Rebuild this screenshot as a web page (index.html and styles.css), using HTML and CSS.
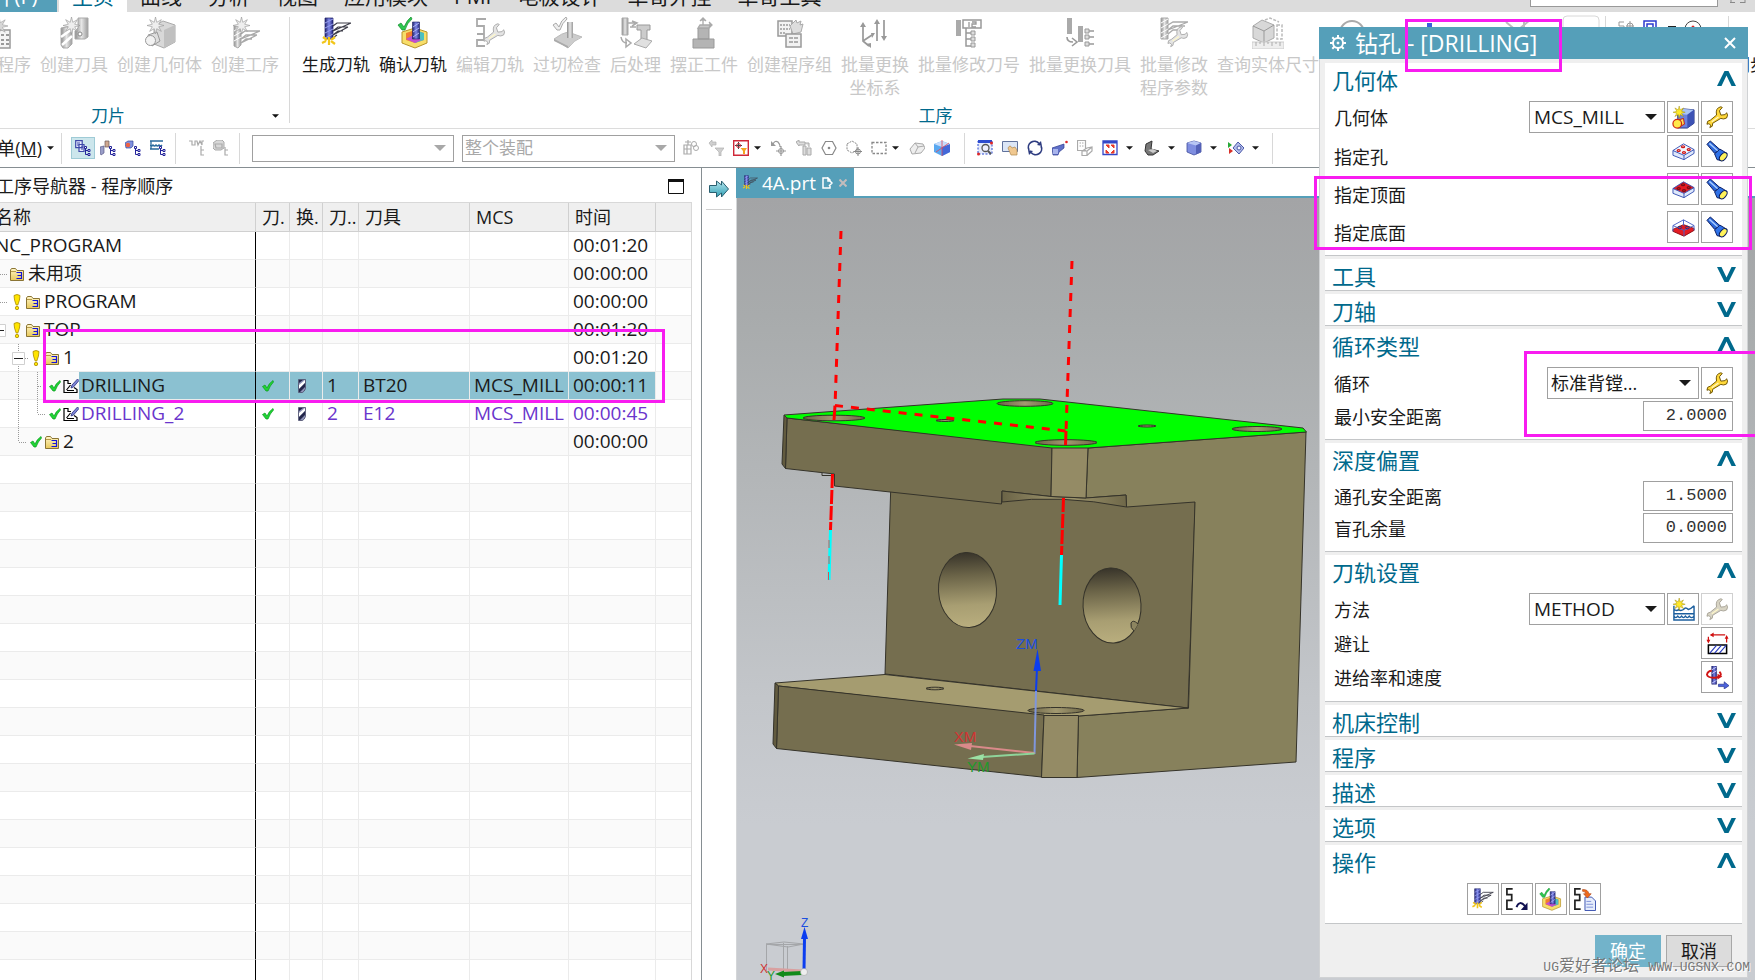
FILE: index.html
```html
<!DOCTYPE html>
<html lang="zh-CN">
<head>
<meta charset="utf-8">
<title>钻孔 - [DRILLING]</title>
<link rel="stylesheet" href="styles.css">
</head>
<body>
<svg class="defs" aria-hidden="true">
  <defs>
    <linearGradient id="gSteel"><stop offset="0" stop-color="#8c8c8c"/><stop offset=".5" stop-color="#e6e6e6"/><stop offset="1" stop-color="#9c9c9c"/></linearGradient>
    <linearGradient id="gBlue"><stop offset="0" stop-color="#22246e"/><stop offset=".5" stop-color="#7f88ea"/><stop offset="1" stop-color="#23257a"/></linearGradient>
    <linearGradient id="gHole" x2="0" y2="1"><stop offset="0" stop-color="#38342a"/><stop offset=".3" stop-color="#6b6448"/><stop offset=".7" stop-color="#a89e72"/><stop offset="1" stop-color="#b9ae7e"/></linearGradient>
    <linearGradient id="gRim"><stop offset="0" stop-color="#6b6447"/><stop offset=".5" stop-color="#a29970"/><stop offset="1" stop-color="#6f6849"/></linearGradient>
    <linearGradient id="gGold" x2="0" y2="1"><stop offset="0" stop-color="#fff6c8"/><stop offset="1" stop-color="#e8c85a"/></linearGradient>
    <linearGradient id="gCyan" x2="0" y2="1"><stop offset="0" stop-color="#b6e6ee"/><stop offset="1" stop-color="#2f9fb4"/></linearGradient>
  </defs>
  <symbol id="star" viewBox="0 0 16 16"><path d="M8 0l1.200 5L13.500 2.500 11 6.800 16 8l-5 1.200 2.500 4.300L9.200 11 8 16 6.800 11 2.500 13.500 5 9.200 0 8l5-1.200L2.500 2.500 6.800 5z"/></symbol>
  <symbol id="chev-up" viewBox="0 0 19 15"><path d="M0 15L7.500 0h4L19 15h-4.500L9.500 4.500 4.500 15z" fill="#00698c"/></symbol>
  <symbol id="chev-down" viewBox="0 0 19 15"><path d="M0 0l7.500 15h4L19 0h-4.500L9.500 10.500 4.500 0z" fill="#00698c"/></symbol>
  <symbol id="caret" viewBox="0 0 12 6"><path d="M0 0h12L6 6z" fill="currentColor"/></symbol>
  <symbol id="folder" viewBox="0 0 14 13"><path d="M.5 12.500V2L1.500.5h4L7 2.500h6.500v10z" fill="url(#gGold)" stroke="#8a7434"/><path d="M1 3.500h5" stroke="#b79a48"/><path d="M6.500 4.500h5v3h-4M11.500 7.500v3h-5" fill="none" stroke="#1414d8" stroke-width="1.200"/></symbol>
  <symbol id="bang" viewBox="0 0 8 16"><path d="M1 1.500Q4-.5 7 1.500 7 6 4.800 11H3.200Q1 6 1 1.500z" fill="#ffe500" stroke="#a98a00" stroke-width=".8"/><circle cx="4" cy="14" r="1.700" fill="#ffe500" stroke="#a98a00" stroke-width=".8"/></symbol>
  <symbol id="tick" viewBox="0 0 12 12"><path d="M.5 6.500L3 5l2 3Q7 3 11 .5l.5 1.500Q8 5.500 6 11H4z" fill="#1fd534" stroke="#0c9a20" stroke-width=".7"/></symbol>
  <symbol id="opdoc" viewBox="0 0 16 16"><path d="M5 2.500H1v12h13v-3l-3-2M1 2.500h4v3h3M3.500 12l4-5M4 12.500h7" fill="none" stroke="#000" stroke-width="1.200"/><path d="M8 10l1-3 5.500-6L16 2.500 10.500 9z" fill="#7d86d6" stroke="#2a2f80" stroke-width=".8"/></symbol>
  <symbol id="bit" viewBox="0 0 8 14"><path d="M.5.500h7v9q-1 3-3 4h-4z" fill="#8f93b8" stroke="#4a4c6a" stroke-width=".8"/><path d="M1 6L7 1v3L1 10z" fill="#fff"/><path d="M1 10L7 4v4L2 13H1zM1 1h4L1 4z" fill="#23264a"/></symbol>
  <symbol id="wrench" viewBox="0 0 24 24"><path d="M22.500 9.500q0 4-4 4-2-.2-3-.6L7 18q.5 4-3 4.500L5 20l-2-1.500L1 19q-.2-4 3.500-4.200L11 9.500Q9.500 2 15.500.8L17 1.500 14 5l1.500 4.500L20 9l1.500-2z" fill="var(--wf,#ffd83a)" stroke="var(--ws,#6d5300)" stroke-width="1"/><path d="M6 16.500l7-5" stroke="#fff8c8" stroke-width="1.200"/></symbol>
  <symbol id="torch" viewBox="0 0 24 24"><path d="M1 4.500L4.500 1l10 9L9 14z" fill="#2b66d8" stroke="#0a1c60"/><path d="M3.500 3.500l9 8" stroke="#a8ccff" stroke-width="1.500"/><path d="M9 14.500l5.500-5 7.500 4.500-6 7.500-4.500-1z" fill="#2f72e8" stroke="#0a1c60"/><ellipse cx="18" cy="17.500" rx="3" ry="5" transform="rotate(40 18 17.500)" fill="#fff25a" stroke="#0a1c60"/></symbol>
  <symbol id="plate" viewBox="0 0 24 18"><path d="M1 8v5l11.500 4.500L23 11V7z" fill="#dfe8fb" stroke="#3b55b5"/><path d="M1 8L12 1l11 6-10.500 6z" fill="var(--top,#f2f5fd)" stroke="#3b55b5"/><path d="M12.500 13v4.500" stroke="#3b55b5"/><g fill="none" stroke="var(--dot,#d01818)" stroke-width="1.300"><ellipse cx="11.500" cy="4" rx="1.600" ry="1"/><ellipse cx="7" cy="8" rx="1.600" ry="1"/><ellipse cx="12.500" cy="10" rx="1.600" ry="1"/><ellipse cx="17.500" cy="7" rx="1.600" ry="1"/></g></symbol>
  <symbol id="plate-bottom" viewBox="0 0 24 18"><path d="M1 11v2l11.500 5L23 12v-2L12 6z" fill="#e51b23" stroke="#8f1016"/><path d="M1 7L12 1l11 6-10.500 5zM1 7v6M23 7v5M12.500 12v6M12 1v6" fill="none" stroke="#4a63c8"/><g fill="none" stroke="#26307c"><ellipse cx="8" cy="9" rx="2" ry="1.300"/><ellipse cx="16" cy="9" rx="2" ry="1.300"/></g></symbol>
  <symbol id="newgeom" viewBox="0 0 24 24"><path d="M6 8l6-5 11 1v14l-7 5H6z" fill="#6c82e0" stroke="#27337d"/><path d="M6 8l6-5 11 1-7 5z" fill="#a9c4f5"/><path d="M16 9l7-5v14l-7 5z" fill="#3d52b4"/><path d="M5 15l7-2 1 6-6 3z" fill="#ffe05a" stroke="#c01a10"/><circle cx="5.500" cy="18.500" r="4.500" fill="#ffe94a" stroke="#d02a10" stroke-width="1.300"/><use href="#star" x="1" y="0" width="13" height="13" fill="#ffe92a" stroke="#a08a00" stroke-width=".6"/></symbol>
  <symbol id="newmethod" viewBox="0 0 24 24"><path d="M2 8v15h21V8M2 16.500h21M2 12q3 2 5 0 2 2 5 0 2-3 5 0 3-1 6-4M2 19q2 3 4 0 2 3 4 0 2 3 4 0 2 3 4 0 2 3 5 0" fill="none" stroke="#1c5f9e" stroke-width="1.500"/><use href="#star" x="1" y="0" width="13" height="13" fill="#ffe92a" stroke="#a08a00" stroke-width=".6"/></symbol>
  <symbol id="avoid" viewBox="0 0 24 24"><path d="M2.500 13.500h19v9h-19z" fill="#fff" stroke="#000" stroke-width="1.600"/><path d="M4 22l7-8M9 22l7-8M14 22l7-8" stroke="#2a3cc0" stroke-width="1.200"/><path d="M5 3h15M2.500 5v5M21.500 11V5" stroke="#d01010" stroke-width="1.300" fill="none"/><path d="M4 3l4-2.500v5zM2.500 12L.5 8h4zM21.500 3l-2 4h4z" fill="#d01010"/></symbol>
  <symbol id="feeds" viewBox="0 0 24 24"><path d="M6 0h5v19H6z" fill="url(#gBlue)" stroke="#1d2068" stroke-width=".6"/><path d="M6 4l5-3M6 8l5-3M6 18l5-3" stroke="#c8ccff"/><path d="M14 6q4 4-3 6-9 1-10-3 1-4 5-4" fill="none" stroke="#d01515" stroke-width="2"/><path d="M12 8l5 3-5 3z" fill="#d01515"/><path d="M13 19h6v-2.500l5 4-5 3.500v-2.500h-6z" fill="#4b62dc" stroke="#23308c" stroke-width=".7"/></symbol>
  <symbol id="gen" viewBox="0 0 32 32"><path d="M5 1h8v21H5z" fill="url(#gBlue)" stroke="#1d2068" stroke-width=".7"/><path d="M5 6l8-4M5 11l8-4M5 16l8-4M5 21l8-4" stroke="#9aa2f0"/><path d="M31 6H17l-4 3M28 10H18l-5 4M23 14h-5l-5 4M17 18l-3 2M31 6L13 14M28 10L13 18" fill="none" stroke="#3c3c48" stroke-width="1.200"/><path d="M9 20v8M3 20l4 3M15 20l-4 3M2 26l4-2M15 27l-4-3" stroke="#f2c61a" stroke-width="2.200"/></symbol>
  <symbol id="verify" viewBox="0 0 32 32"><path d="M5 15l13-4 12 4v11l-12 5-13-5z" fill="#f7de6a" stroke="#b8942a"/><path d="M9 16l9-3 9 3v7l-9 3-9-3z" fill="#f08030"/><path d="M18 13l9 3v7l-9 3z" fill="#4cc0c0"/><path d="M9 22l9-5 6 6-6 3z" fill="#c050d0"/><path d="M15.500 5h7v17h-7z" fill="url(#gBlue)" stroke="#1d2068" stroke-width=".6"/><path d="M16 10l6-4M16 15l6-4M16 20l6-4" stroke="#b0b6f6"/><path d="M1 8l3-2 3 4Q10 3 14 0l1 2Q10 6 8 13H5z" fill="#2cc84e" stroke="#138a2c" stroke-width=".7"/></symbol>
  <symbol id="replay" viewBox="0 0 24 24"><path d="M8 1H2v6h5v6H2v9h6M7 7v6" fill="none" stroke="#222" stroke-width="1.800"/><path d="M12 20q3-8 9-1" fill="none" stroke="#101050" stroke-width="2"/><path d="M23.500 15v8h-7z" fill="#101050"/></symbol>
  <symbol id="listing" viewBox="0 0 24 24"><path d="M8 1H2v6h5v6H2v9h6M7 7v6" fill="none" stroke="#222" stroke-width="1.800"/><path d="M12.500 9.500h7l4 4v10h-11z" fill="#e6edfc" stroke="#3a52b0"/><path d="M14 14h5M14 17h7M14 20h7" stroke="#7d90d8"/><path d="M10 1.500q6 0 6.500 4.500h2.500l-4 4.500L11 6h2.500Q13 3.500 10 3.500z" fill="#f06a1c" stroke="#a83a08" stroke-width=".6"/></symbol>

  <symbol id="g-prog" viewBox="0 0 32 32"><path d="M12 13h17v18H12z" fill="#f4f4f4" stroke="#999" stroke-width="1.500"/><path d="M15 18h3m2 0h3m2 0h3M15 23h3m2 0h3m2 0h3M15 27h3m2 0h3m2 0h3" stroke="#999" stroke-width="2"/><use href="#star" x="9" y="0" width="18" height="18" fill="#d8d8d8" stroke="#999" stroke-width=".5"/></symbol>
  <symbol id="g-tool" viewBox="0 0 32 32"><path d="M20 1h10v19l-3 2H17v-8l3-3z" fill="url(#gSteel)" stroke="#aaa"/><circle cx="22" cy="17" r="2" fill="#fff" stroke="#888"/><path d="M3 11l11-2v18l-4 4H5l-2-3z" fill="url(#gSteel)" stroke="#aaa"/><path d="M3 20l11-8M4 28l10-9" stroke="#fff" stroke-width="2.500"/><use href="#star" x="5" y="0" width="17" height="17" fill="#eee" stroke="#999" stroke-width=".6"/></symbol>
  <symbol id="g-geom" viewBox="0 0 32 32"><path d="M10 9l9-5 12 4v17l-11 6-10-4z" fill="#d8d8d8" stroke="#aaa"/><path d="M20 13l11-5v17l-11 6z" fill="#c0c0c0"/><path d="M4 18l9-3 3 9-8 5z" fill="#ddd" stroke="#999"/><circle cx="6.500" cy="23.500" r="5" fill="#f2f2f2" stroke="#999"/><use href="#star" x="3" y="0" width="17" height="17" fill="#eee" stroke="#999" stroke-width=".6"/></symbol>
  <symbol id="g-op" viewBox="0 0 32 32"><path d="M5 9h7v19l-3 3-4-2z" fill="url(#gSteel)" stroke="#aaa"/><path d="M5 14l7-4M5 19l7-4M5 24l7-4" stroke="#fff"/><path d="M31 14H16l-4 3M28 18H17l-5 4M23 22h-6l-5 4M31 14L12 22M28 18l-16 8" fill="none" stroke="#aaa" stroke-width="1.300"/><use href="#star" x="4" y="0" width="17" height="17" fill="#eee" stroke="#999" stroke-width=".6"/></symbol>
  <symbol id="g-edit" viewBox="0 0 32 32"><path d="M12 2H3v7h7v8H3M10 17v6H3v6h8" fill="none" stroke="#aaa" stroke-width="1.800"/><use href="#wrench" x="9" y="6" width="23" height="23"/></symbol>
  <symbol id="g-check" viewBox="0 0 32 32"><path d="M3 22q8-6 14-7l14 5q-8 3-14 11z" fill="#ccc" stroke="#bbb"/><path d="M3 22l14 7v2L3 24z" fill="#aaa"/><path d="M16 5h6v16h-6z" fill="url(#gSteel)"/><path d="M2 8l3-2 3 4Q10 3 15 0l1 2Q11 6 9 13H6z" fill="#eee" stroke="#aaa"/></symbol>
  <symbol id="g-post" viewBox="0 0 32 32"><path d="M2 1h6v17H2z" fill="url(#gSteel)" stroke="#aaa"/><path d="M8 6h8M10 10h6M12 4l5 2-5 3M1 20q1 6 6 6M6 22l5 4-5 4z" fill="none" stroke="#aaa" stroke-width="1.500"/><path d="M17 8h13v5h-3v13h-6V13h-4z" fill="#ccc" stroke="#999"/><path d="M14 27l8-6 10 3-6 7z" fill="#e0e0e0" stroke="#aaa"/></symbol>
  <symbol id="g-orient" viewBox="0 0 32 32"><path d="M5 22h21v9H5zM10 11h11v11H10z" fill="#b4b4b4" stroke="#999"/><path d="M10 11l2-3h10l-1 3zM15 8V2M12 4l3-3 3 3M15 8h8M21 5l3 3-3 3" fill="#c8c8c8" stroke="#aaa" stroke-width="1.300"/></symbol>
  <symbol id="g-group" viewBox="0 0 32 32"><path d="M4 4h14v15H4z" fill="#f2f2f2" stroke="#999" stroke-width="1.500"/><path d="M6 8h10M6 12h10M6 16h6" stroke="#999" stroke-width="1.500" stroke-dasharray="2 1"/><path d="M16 9l6-6 1 3 4-2-1 4 3-1-2 8-8 2z" fill="#ddd" stroke="#aaa"/><path d="M12 17h15v13H12z" fill="#f2f2f2" stroke="#999" stroke-width="1.500"/><path d="M15 21h9M15 25h9" stroke="#999" stroke-width="1.500" stroke-dasharray="4 1"/></symbol>
  <symbol id="g-csys" viewBox="0 0 32 32"><path d="M4 8v16l6 5M4 24l9-6M18 24V5M25 3v19" fill="none" stroke="#999" stroke-width="1.700"/><path d="M1 10l3-5 3 5zM15 7l3-5 3 5zM22 19l3 5 3-5zM12 16h4l-3 5zM7 27l5-1v5z" fill="#999"/></symbol>
  <symbol id="g-num" viewBox="0 0 32 32"><path d="M3 3h5v16H3z" fill="#aaa"/><path d="M10 3h18v8H10zM13 11v18h6M13 16h6M13 22h6" fill="none" stroke="#999" stroke-width="1.500"/><path d="M16 5v5M19 5h4v2h-4v3h4" fill="none" stroke="#999" stroke-width="1.300"/><path d="M18 14h4v4h-4zM18 20h4v4h-4zM18 26h4v4h-4z" fill="#ddd" stroke="#999"/></symbol>
  <symbol id="g-swap" viewBox="0 0 32 32"><path d="M3 1h5v16H3zM14 9h5v16h-5z" fill="#aaa"/><path d="M3 20q0 5 6 5M8 21l5 4-5 4M22 14h8M22 20h8M22 27h8" fill="none" stroke="#999" stroke-width="1.600"/><path d="M21 12h4v4h-4zM21 18h4v4h-4zM21 25h4v4h-4z" fill="#ddd" stroke="#999"/></symbol>
  <symbol id="g-param" viewBox="0 0 32 32"><path d="M3 1h7v21H3z" fill="url(#gSteel)" stroke="#aaa"/><path d="M3 6l7-4M3 11l7-4M3 16l7-4M3 21l7-4" stroke="#fff"/><path d="M30 5H15l-5 3M27 9H15l-5 4M20 13h-5l-5 4M30 5l-20 8" fill="none" stroke="#aaa" stroke-width="1.300"/><use href="#wrench" x="9" y="9" width="22" height="22"/></symbol>
  <symbol id="g-size" viewBox="0 0 32 32"><path d="M1 9l9-6 12 5v13l-10 5-11-5z" fill="#d8d8d8" stroke="#aaa"/><path d="M1 9l11 5 10-6M12 14v12" fill="none" stroke="#999"/><path d="M0 25h32v7H0z" fill="#eee" stroke="#ccc"/><path d="M4 25v4m4-4v2m4-2v4m4-4v2m4-2v4m4-4v2m4-2v4" stroke="#aaa"/><path d="M13 3l5-2 9 4M25 8h5v14h-5z" fill="none" stroke="#bbb" stroke-width="1.500" stroke-dasharray="3 1.500"/></symbol>

  <symbol id="t-branch" viewBox="0 0 16 16"><path d="M10.500 8v6.500h3M10.500 10.500h3" fill="none" stroke="#23239a"/><path d="M9.500 6.500h2v2h-2zM13 9.500h2v2h-2zM13 13.500h2v2h-2z" fill="#fff" stroke="#23239a"/></symbol>
  <symbol id="t-prog" viewBox="0 0 16 16"><path d="M.7.700h6.500v7H.700zM4 4.500h5v7H4z" fill="#e8ebff" stroke="#3d48a8" stroke-width="1.200"/><path d="M2 3h3M2 5h2M6 7h2M6 9h2" stroke="#3d48a8"/><use href="#t-branch"/></symbol>
  <symbol id="t-tool" viewBox="0 0 16 16"><path d="M0 7l4-1v7l-3 2-1-2z" fill="#9a9ec8" stroke="#5a5a88" stroke-width=".7"/><path d="M5 1h4v6H5z" fill="#d0a890" stroke="#6a5a5a" stroke-width=".7"/><use href="#t-branch"/></symbol>
  <symbol id="t-geom" viewBox="0 0 16 16"><path d="M0 3l3-2h5v5L6 8H1z" fill="#7f90e0" stroke="#3a4a9a" stroke-width=".7"/><circle cx="3" cy="5" r="2.200" fill="#f06040"/><use href="#t-branch"/></symbol>
  <symbol id="t-method" viewBox="0 0 16 16"><path d="M0 1h13M0 5q1.500 2 3 0 1.500 2 3 0 1.500 2 3 0 1.500 2 3 0M0 9h9M1 1v8" fill="none" stroke="#286a9c" stroke-width="1.300"/><use href="#t-branch"/></symbol>
  <symbol id="t-graya" viewBox="0 0 16 16"><path d="M0 1h3v4h3V1h2l1 4 2-4 2 4V1h2M12 6v9h3M12 10h3" fill="none" stroke="#aaa" stroke-width="1.200"/></symbol>
  <symbol id="t-grayb" viewBox="0 0 16 16"><path d="M0 3l4-3h5l2 2v6l-3 2H2L0 8z" fill="#d8d8d8" stroke="#aaa"/><path d="M2 4h7v4H3zM12 7v8h3M12 10h3" fill="none" stroke="#aaa" stroke-width="1.200"/></symbol>
  <symbol id="t-asm" viewBox="0 0 16 16"><path d="M1 5h7v9H1zM1 9h7M4 5v9M5 0v5M2 2h6" fill="none" stroke="#aaa" stroke-width="1.200"/><circle cx="11" cy="4" r="2.500" fill="none" stroke="#aaa"/><circle cx="13" cy="8" r="2.500" fill="none" stroke="#aaa"/></symbol>
  <symbol id="t-undo" viewBox="0 0 16 16"><path d="M1 3l3-3v2h4v3H4v2zM7 8h9l-3 4v4h-2v-4z" fill="#d0d0d0" stroke="#b0b0b0" stroke-width=".7"/></symbol>
  <symbol id="t-filter" viewBox="0 0 16 16"><path d="M.7.700h14.600v14.600H.700z" fill="#fff" stroke="#d02838" stroke-width="1.400"/><path d="M5.500 2v7M2 5.500h7" stroke="#444"/><circle cx="5.500" cy="5.500" r="2" fill="none" stroke="#d02838"/><path d="M7.500 8H14l-2 3v3h-2v-3z" fill="#f6a420"/></symbol>
  <symbol id="t-snap" viewBox="0 0 16 16"><path d="M2 4q2-4 5-2 2 2 2 5M10 6v10M5 11h10" fill="none" stroke="#999" stroke-width="1.200"/><circle cx="10" cy="11" r="2.500" fill="none" stroke="#999"/><path d="M0 1v5h5z" fill="#999"/></symbol>
  <symbol id="t-hist" viewBox="0 0 16 16"><path d="M0 2l3-2v2h6v3H3v1zM7 6h3v9H7zM11 8h4v7h-4zM9 3h4v4" fill="#ddd" stroke="#aaa"/></symbol>
  <symbol id="t-hex" viewBox="0 0 16 16"><path d="M4.500 1.500h7L15 8l-3.500 6.500h-7L1 8z" fill="none" stroke="#888" stroke-width="1.200"/><circle cx="8" cy="8" r="1.300" fill="#888"/></symbol>
  <symbol id="t-cubep" viewBox="0 0 16 16"><path d="M1 4l5-3 5 3v6l-5 3-5-3z" fill="none" stroke="#888" stroke-dasharray="2 1"/><path d="M12 7v9M7.500 11.500h9" stroke="#888"/><circle cx="12" cy="11.500" r="2.500" fill="none" stroke="#888"/></symbol>
  <symbol id="t-rect" viewBox="0 0 16 16"><path d="M1 2.500h14v11H1z" fill="none" stroke="#888" stroke-width="1.300" stroke-dasharray="2.500 1.500"/></symbol>
  <symbol id="t-clip" viewBox="0 0 16 16"><path d="M1 9l5-6 8 1 2 4-4 5-9 1z" fill="#eee" stroke="#aaa"/><path d="M6 3l3 4-3 6M9 7l6-1" fill="none" stroke="#aaa"/></symbol>
  <symbol id="t-cube3" viewBox="0 0 16 16"><path d="M0 4l8-3 8 3v8l-8 4-8-4z" fill="#58a8f0"/><path d="M8 7l8-3v8l-8 4z" fill="#4468d8"/><path d="M0 4l8-3 8 3-8 3z" fill="#c8dcfa"/><path d="M8 0v16M2 12l13-9" stroke="#e04858" stroke-width=".8"/></symbol>
  <symbol id="t-fit" viewBox="0 0 16 16"><path d="M1 1h14v13H1z" fill="#e4eafc" stroke="#2c4ad0" stroke-dasharray="2 1.500"/><path d="M1 0h14v3H1z" fill="#2c4ad0"/><circle cx="8.500" cy="8" r="3.500" fill="#eef" stroke="#555" stroke-width="1.300"/><path d="M11 11l3 3" stroke="#555" stroke-width="2"/><circle cx="1.500" cy="14" r="1.500" fill="#e02828"/><circle cx="14.500" cy="3" r="1.500" fill="#e02828"/></symbol>
  <symbol id="t-pan" viewBox="0 0 16 16"><path d="M.5 1.500h15v10H.5z" fill="#dce6f6" stroke="#60729c"/><path d="M6 8q2-4 4 0l3-1 2 3v5H9z" fill="#f0c890" stroke="#b08a50" stroke-width=".7"/></symbol>
  <symbol id="t-rot" viewBox="0 0 16 16"><path d="M2 10a6 6 0 0 1 10-6.500M14 6a6 6 0 0 1-10 6.500" fill="none" stroke="#2e3c80" stroke-width="1.700"/><path d="M10 5l5 1-1-5zM6 11l-5-1 1 5z" fill="#2e3c80"/></symbol>
  <symbol id="t-persp" viewBox="0 0 16 16"><path d="M0 8l6-2 6-2v4l-5 4-1 3H1z" fill="#6070c8" stroke="#2e3c90" stroke-width=".7"/><path d="M1 9h5v5H1z" fill="#a8b4ec"/><circle cx="14.500" cy="2" r="1.300" fill="#e02828"/></symbol>
  <symbol id="t-layout" viewBox="0 0 16 16"><path d="M.5.5h8v10h-8zM5 15.500V11l5-3 5-1v4l-5 4.500zM5 11h5v4M10 11l5-4" fill="none" stroke="#aaa" stroke-width="1.200"/><path d="M2.500 3h4M2.500 6h4" stroke="#aaa" stroke-dasharray="1.500 1"/></symbol>
  <symbol id="t-full" viewBox="0 0 16 16"><path d="M1 1h14v13.500H1z" fill="#fff" stroke="#3348c8" stroke-width="1.300"/><path d="M1 1h14v2.500H1z" fill="#3348c8"/><path d="M4 5h3v3zM12 5v3L9 5zM4 13v-3l3 3zM12 13H9l3-3z" fill="#e83a28" stroke="#e83a28"/></symbol>
  <symbol id="t-shade" viewBox="0 0 16 16"><path d="M1 11l1-7 6-3-1 8 8 2-6 4H4z" fill="#777" stroke="#333"/><path d="M4 10l5-1 4 2-4 2z" fill="#ccc"/></symbol>
  <symbol id="t-box" viewBox="0 0 16 16"><path d="M1 3l7-2 7 2v9l-7 3-7-3z" fill="#7f8ee0" stroke="#3f4c9c" stroke-width=".8"/><path d="M1 3l7-2 7 2-5 2.500z" fill="#b8c6f4"/><path d="M10 5.500L15 3v9l-5 2.500z" fill="#5361b8"/></symbol>
  <symbol id="t-style" viewBox="0 0 16 16"><path d="M0 2l4 3-4 3z" fill="#28a838"/><path d="M1 14V8l4 3z" fill="#d83028"/><path d="M5 8l5-6 6 6-5 6z" fill="#b4bdea" stroke="#4a58a8"/><circle cx="11" cy="8" r="2" fill="#f2f4ff" stroke="#4a58a8"/></symbol>
</svg>

<div class="app">
  <nav class="tabs" aria-label="功能区">
    <button class="tab file">文件(F)</button>
    <button class="tab active">主页</button>
    <button class="tab">曲线</button>
    <button class="tab">分析</button>
    <button class="tab">视图</button>
    <button class="tab">应用模块</button>
    <button class="tab">PMI</button>
    <button class="tab">电极设计</button>
    <button class="tab">草哥外挂</button>
    <button class="tab">草哥工具</button>
    <input class="finder" type="text" aria-label="查找命令">
    <button class="expand" aria-label="全屏"><svg width="16" height="3"><path d="M0 2.500h5M1 0v3M10 2.500h5M15 0v3" stroke="#888" fill="none"/></svg></button>
  </nav>

  <header class="ribbon">
    <section class="group first">
      <div class="tools">
        <button class="cmd" disabled><svg><use href="#g-prog"/></svg><span>创建程序</span></button>
        <button class="cmd" disabled><svg><use href="#g-tool"/></svg><span>创建刀具</span></button>
        <button class="cmd" disabled><svg><use href="#g-geom"/></svg><span>创建几何体</span></button>
        <button class="cmd" disabled><svg><use href="#g-op"/></svg><span>创建工序</span></button>
      </div>
      <div class="group-title"><span>刀片</span><svg class="caret"><use href="#caret"/></svg></div>
    </section>
    <section class="group second">
      <div class="tools">
        <button class="cmd"><svg><use href="#gen"/></svg><span>生成刀轨</span></button>
        <button class="cmd"><svg><use href="#verify"/></svg><span>确认刀轨</span></button>
        <button class="cmd" disabled><svg><use href="#g-edit"/></svg><span>编辑刀轨</span></button>
        <button class="cmd" disabled><svg><use href="#g-check"/></svg><span>过切检查</span></button>
        <button class="cmd" disabled><svg><use href="#g-post"/></svg><span>后处理</span></button>
        <button class="cmd" disabled><svg><use href="#g-orient"/></svg><span>摆正工件</span></button>
        <button class="cmd" disabled><svg><use href="#g-group"/></svg><span>创建程序组</span></button>
        <button class="cmd" disabled><svg><use href="#g-csys"/></svg><span>批量更换<br>坐标系</span></button>
        <button class="cmd" disabled><svg><use href="#g-num"/></svg><span>批量修改刀号</span></button>
        <button class="cmd" disabled><svg><use href="#g-swap"/></svg><span>批量更换刀具</span></button>
        <button class="cmd" disabled><svg><use href="#g-param"/></svg><span>批量修改<br>程序参数</span></button>
        <button class="cmd" disabled><svg><use href="#g-size"/></svg><span>查询实体尺寸</span></button>
        <svg class="gallery" width="414" height="24" viewBox="1320 12 414 24" fill="none">
          <circle cx="1352" cy="33" r="12" stroke="#aaa" stroke-width="2"/>
          <path d="M1427 23h5v8h-5z" fill="#3a62d8"/>
          <path d="M1506 22l12 10M1530 20l-12 10M1524 19v16" stroke="#bbb" stroke-width="2"/>
          <path d="M1563 36V20q0-4 4-4h28q4 0 4 4v16M1605.500 16v20M1728.500 16v20" stroke="#d8d8d8"/>
          <path d="M1624 22h-5v4h5v4M1626 26h8M1630 21v10" stroke="#999"/><circle cx="1630" cy="26" r="3" stroke="#999"/>
          <path d="M1644 21h12v12h-12zM1647 24h6v8h-6z" stroke="#2b38d0" stroke-width="1.500"/>
          <path d="M1668 27h8" stroke="#222" stroke-width="2"/><circle cx="1693" cy="29" r="8" stroke="#444"/><circle cx="1693" cy="27" r="1.500" fill="#d22"/>
        </svg>
      </div>
      <div class="group-title"><span>工序</span></div>
    </section>
    <section class="group third"><button class="cmd"><svg></svg><span>同步建模</span></button></section>
  </header>

  <div class="toolbar">
    <button class="menu"><span>菜单(<u>M</u>)</span><svg class="caret"><use href="#caret"/></svg></button>
    <div class="set nav-set">
      <button class="tb on" aria-label="程序顺序视图"><svg><use href="#t-prog"/></svg></button>
      <button class="tb" aria-label="机床视图"><svg><use href="#t-tool"/></svg></button>
      <button class="tb" aria-label="几何视图"><svg><use href="#t-geom"/></svg></button>
      <button class="tb" aria-label="加工方法视图"><svg><use href="#t-method"/></svg></button>
    </div>
    <div class="set">
      <button class="tb" aria-label="显示刀轨"><svg><use href="#t-graya"/></svg></button>
      <button class="tb" aria-label="显示 IPW"><svg><use href="#t-grayb"/></svg></button>
    </div>
    <div class="set sel-set">
      <div class="pick"><select aria-label="类型过滤器"><option></option></select><svg class="caret"><use href="#caret"/></svg></div>
      <div class="pick"><select aria-label="选择范围"><option>整个装配</option></select><svg class="caret"><use href="#caret"/></svg></div>
    </div>
    <div class="set snap-set">
      <button class="tb" aria-label="装配"><svg><use href="#t-asm"/></svg></button>
      <button class="tb" aria-label="重置过滤器"><svg><use href="#t-undo"/></svg></button>
      <button class="tb" aria-label="过滤器"><svg><use href="#t-filter"/></svg></button>
      <button class="drop" aria-label="更多"><svg class="caret"><use href="#caret"/></svg></button>
      <button class="tb" aria-label="恢复点"><svg><use href="#t-snap"/></svg></button>
      <button class="tb" aria-label="历史"><svg><use href="#t-hist"/></svg></button>
      <button class="tb" aria-label="六边形"><svg><use href="#t-hex"/></svg></button>
      <button class="tb" aria-label="实体点"><svg><use href="#t-cubep"/></svg></button>
      <button class="tb" aria-label="矩形选择"><svg><use href="#t-rect"/></svg></button>
      <button class="drop" aria-label="更多"><svg class="caret"><use href="#caret"/></svg></button>
      <button class="tb" aria-label="截面"><svg><use href="#t-clip"/></svg></button>
      <button class="tb" aria-label="着色体"><svg><use href="#t-cube3"/></svg></button>
    </div>
    <div class="set view-set">
      <button class="tb" aria-label="适合窗口"><svg><use href="#t-fit"/></svg></button>
      <button class="tb" aria-label="平移"><svg><use href="#t-pan"/></svg></button>
      <button class="tb" aria-label="旋转"><svg><use href="#t-rot"/></svg></button>
      <button class="tb" aria-label="透视"><svg><use href="#t-persp"/></svg></button>
      <button class="tb" aria-label="布局"><svg><use href="#t-layout"/></svg></button>
      <button class="tb" aria-label="全屏"><svg><use href="#t-full"/></svg></button>
      <button class="drop" aria-label="更多"><svg class="caret"><use href="#caret"/></svg></button>
      <button class="tb" aria-label="渲染"><svg><use href="#t-shade"/></svg></button>
      <button class="drop" aria-label="更多"><svg class="caret"><use href="#caret"/></svg></button>
      <button class="tb" aria-label="定向视图"><svg><use href="#t-box"/></svg></button>
      <button class="drop" aria-label="更多"><svg class="caret"><use href="#caret"/></svg></button>
      <button class="tb" aria-label="显示样式"><svg><use href="#t-style"/></svg></button>
      <button class="drop" aria-label="更多"><svg class="caret"><use href="#caret"/></svg></button>
    </div>
  </div>

  <main class="work">
    <section class="navigator">
      <div class="nav-head">
        <h2>工序导航器 - 程序顺序</h2>
        <button aria-label="最大化"><svg width="16" height="15"><path d="M.5.500h15v14H.500z" fill="#fff" stroke="#111"/><path d="M0 0h16v3H0z" fill="#111"/></svg></button>
      </div>
      <div class="table-wrap">
      <table class="ops">
        <colgroup><col class="c-name"><col class="c-a"><col class="c-b"><col class="c-c"><col class="c-d"><col class="c-e"><col class="c-f"><col></colgroup>
        <thead><tr><th><span class="cut">名称</span></th><th>刀.</th><th>换.</th><th>刀..</th><th>刀具</th><th>MCS</th><th>时间</th><th></th></tr></thead>
        <tbody>
          <tr><td><span class="cut">NC_PROGRAM</span></td><td></td><td></td><td></td><td></td><td></td><td>00:01:20</td><td></td></tr>
          <tr><td><div class="node"><svg width="27" height="27"><path d="M0 14.500h8" class="dots"/><use href="#folder" x="10" y="8" width="14" height="13"/></svg><span class="zh">未用项</span></div></td><td></td><td></td><td></td><td></td><td></td><td>00:00:00</td><td></td></tr>
          <tr><td><div class="node"><svg width="43" height="27"><path d="M0 14.500h8" class="dots"/><use href="#bang" x="13" y="6" width="8" height="16"/><use href="#folder" x="26" y="8" width="14" height="13"/></svg><span>PROGRAM</span></div></td><td></td><td></td><td></td><td></td><td></td><td>00:00:00</td><td></td></tr>
          <tr><td><div class="node"><svg width="43" height="27"><path d="M-6.500 8.500h12v12h-12z" class="exp"/><path d="M-3 14.500h7" stroke="#222"/><use href="#bang" x="13" y="6" width="8" height="16"/><use href="#folder" x="26" y="8" width="14" height="13"/></svg><span>TOP</span></div></td><td></td><td></td><td></td><td></td><td></td><td>00:01:20</td><td></td></tr>
          <tr><td><div class="node"><svg width="62" height="27"><path d="M18.500 0v27M25 14.500h3" class="dots"/><path d="M12.500 8.500h12v12h-12z" class="exp"/><path d="M14 14.500h9" stroke="#222"/><use href="#bang" x="32" y="6" width="8" height="16"/><use href="#folder" x="45" y="8" width="14" height="13"/></svg><span>1</span></div></td><td></td><td></td><td></td><td></td><td></td><td>00:01:20</td><td></td></tr>
          <tr class="selected"><td><div class="node"><svg width="79" height="27"><path d="M18.500 0v27M37.500 0v27M38 14.500h4" class="dots"/><use href="#tick" x="49" y="8" width="12" height="12"/><use href="#opdoc" x="63" y="6" width="16" height="16"/></svg><span>DRILLING</span></div></td><td><svg width="12" height="12"><use href="#tick"/></svg></td><td><svg width="8" height="14"><use href="#bit"/></svg></td><td>1</td><td>BT20</td><td>MCS_MILL</td><td>00:00:11</td><td></td></tr>
          <tr class="pending"><td><div class="node"><svg width="79" height="27"><path d="M18.500 0v27M37.500 0v14M38 14.500h8" class="dots"/><use href="#tick" x="49" y="8" width="12" height="12"/><use href="#opdoc" x="63" y="6" width="16" height="16"/></svg><span>DRILLING_2</span></div></td><td><svg width="12" height="12"><use href="#tick"/></svg></td><td><svg width="8" height="14"><use href="#bit"/></svg></td><td>2</td><td>E12</td><td>MCS_MILL</td><td>00:00:45</td><td></td></tr>
          <tr><td><div class="node"><svg width="62" height="27"><path d="M18.500 0v14M19 14.500h8" class="dots"/><use href="#tick" x="30" y="8" width="12" height="12"/><use href="#folder" x="45" y="8" width="14" height="13"/></svg><span>2</span></div></td><td></td><td></td><td></td><td></td><td></td><td>00:00:00</td><td></td></tr>
          <tr><td><td><td><td><td><td><td><td></tr>
          <tr><td><td><td><td><td><td><td><td></tr>
          <tr><td><td><td><td><td><td><td><td></tr>
          <tr><td><td><td><td><td><td><td><td></tr>
          <tr><td><td><td><td><td><td><td><td></tr>
          <tr><td><td><td><td><td><td><td><td></tr>
          <tr><td><td><td><td><td><td><td><td></tr>
          <tr><td><td><td><td><td><td><td><td></tr>
          <tr><td><td><td><td><td><td><td><td></tr>
          <tr><td><td><td><td><td><td><td><td></tr>
          <tr><td><td><td><td><td><td><td><td></tr>
          <tr><td><td><td><td><td><td><td><td></tr>
          <tr><td><td><td><td><td><td><td><td></tr>
          <tr><td><td><td><td><td><td><td><td></tr>
          <tr><td><td><td><td><td><td><td><td></tr>
          <tr><td><td><td><td><td><td><td><td></tr>
          <tr><td><td><td><td><td><td><td><td></tr>
          <tr><td><td><td><td><td><td><td><td></tr>
          <tr><td><td><td><td><td><td><td><td></tr>
        </tbody>
      </table>
      </div>
      <div class="mark mark-rows"></div>
    </section>

    <aside class="rail"><button aria-label="展开"><svg width="20" height="18"><path d="M.5 5.500h7V1l5 4V1l7 8-7 8v-4l-5 4v-4.500h-7z" fill="url(#gCyan)" stroke="#2a5f70"/></svg></button></aside>

    <section class="stage">
      <div class="doc-tabs">
        <div class="doc-tab">
          <svg width="16" height="16"><use href="#gen"/></svg><span>4A.prt</span>
          <svg width="11" height="12" fill="none" stroke="#fff" stroke-width="1.500"><path d="M6 1H1v10h7V9M8 4V3L6 1v3h2l2 2-3 3"/></svg>
          <button aria-label="关闭标签"><svg width="8" height="8"><path d="M.5.5l7 7M7.500.5l-7 7" stroke="#c4bcbc" stroke-width="2"/></svg></button>
        </div>
      </div>
      <div class="canvas">
      <svg class="scene" viewBox="737 198 1018 782" preserveAspectRatio="xMinYMin slice">
        <g stroke="#35332a" stroke-width="1" stroke-linejoin="round">
          <path d="M891 480L885 674 1188 708 1196 480z" fill="#756e4f"/>
          <path d="M1088 448L1306 432 1296 762 1077 777.500 1078.500 716 1188.500 708 1195 502 1126.500 507 1126 495 1086 498z" fill="#87815c"/>
          <path d="M787 418L1052 447 1051 496.500 1002 491 1001.500 504 834.500 486V474L785.500 468.500z" fill="#756e4f"/>
          <path d="M1002 491L1051 496.500 1086 498 1126 495 1126.500 507Q1060 494 1002 502z" fill="url(#gRim)"/>
          <path d="M1052 447H1088L1086 498 1051 496.500z" fill="#948b65"/>
          <path d="M784 415L787 418 785.500 468.500 782 464z" fill="#625b3f"/>
          <path d="M822 473v2.500h10" fill="none"/>
          <path d="M784 415L1003 399H1040L1303 428 1306.500 432 1088 448H1052L787 418z" fill="#0f0"/>
          <path d="M775 683L885 674.500 1188.500 708 1078.500 716H1044L778.500 686z" fill="#a59c70"/>
          <path d="M778.500 686L1044 715 1041.500 777 776.500 748.500z" fill="#756e4f"/>
          <path d="M1044 715.500H1078.500L1077 777.500H1041.500z" fill="#948b65"/>
          <path d="M775 683L778.500 686 776.500 748.500 773 744z" fill="#625b3f"/>
          <ellipse cx="967.500" cy="590" rx="29" ry="37.500" transform="rotate(-3 967 590)" fill="url(#gHole)"/>
          <ellipse cx="1112" cy="605.500" rx="29" ry="37.500" transform="rotate(-3 1112 605)" fill="url(#gHole)"/>
          <path d="M1138 624q-5-5-7-1-1 5 3 8" fill="#8d8560"/>
          <g fill="url(#gRim)">
            <ellipse cx="834" cy="418" rx="31" ry="2.800"/>
            <ellipse cx="1025" cy="403.500" rx="28" ry="2.800"/>
            <ellipse cx="1066" cy="442.500" rx="31" ry="2.800"/>
            <ellipse cx="1257" cy="429" rx="25" ry="2.500"/>
            <ellipse cx="945" cy="420.500" rx="9" ry="1"/>
            <ellipse cx="1147" cy="426" rx="9" ry="1"/>
            <ellipse cx="935" cy="688.500" rx="9" ry="1.300"/>
            <ellipse cx="1056" cy="710.500" rx="28" ry="3"/>
          </g>
        </g>
        <g fill="none" stroke="#f00" stroke-width="3">
          <path d="M841 231L835 407M1072 261L1066 431M835 405.500L1066 431" stroke-dasharray="8 8"/>
          <path d="M835 405.500L834 420M1066 431L1065.500 445"/>
          <path d="M832.500 474L830.500 530M1063.500 498L1061.500 555" stroke-dasharray="14 2"/>
          <path d="M830.500 530L829 580M1061.500 555L1060 605" stroke="#0ff" stroke-width="3"/>
          <path d="M829 540v8M829 556v8M828.500 572v8" stroke-width="1" stroke="#e05050"/>
        </g>
        <g class="axis">
          <path d="M1034.500 754L1036 691" stroke="#7f96dc" stroke-width="2"/>
          <path d="M1036 691L1037 668" stroke="#0b3df0" stroke-width="2"/><path d="M1037.500 649L1041 671H1033.500z" fill="#0b3df0"/>
          <path d="M1034.500 753L970 746" stroke="#d98a8a" stroke-width="2"/><path d="M954 744.500L972 743 971 750z" fill="#d98a8a"/>
          <path d="M1034.500 753.500L982 757" stroke="#8fd49a" stroke-width="2"/><path d="M967.500 758.500L984 754 983 760z" fill="#9be0a4"/>
          <text x="1016" y="649" fill="#1c4fe0">ZM</text><text x="954" y="742" fill="#d03434">XM</text><text x="967" y="772" fill="#1f9a2a">YM</text>
          <path d="M766.500 944.500h37M766.500 944v27M783.500 943v28M787.500 946v24M766 944l22 3 16-3-20-2z" fill="none" stroke="#a4a6a9"/>
          <path d="M804 970L804.500 938" stroke="#0b3df0" stroke-width="3"/><path d="M804.500 927l3.500 12h-7z" fill="#0b3df0"/>
          <path d="M802 971L768 969" stroke="#d9a0a0" stroke-width="3"/>
          <path d="M802 973L782 974" stroke="#128a1a" stroke-width="4"/><path d="M775 974l9-3.500v7z" fill="#128a1a"/>
          <circle cx="804" cy="972" r="3.500" fill="#eee" stroke="#999" stroke-width=".5"/>
          <text x="801" y="927" fill="#1c4fe0" class="small">Z</text><text x="760" y="973" fill="#d03434" class="small">X</text><text x="767" y="980" fill="#1f9a2a" class="small">Y</text>
        </g>
      </svg>
      </div>
    </section>
  </main>

  <form class="dialog" aria-label="钻孔">
    <div class="titlebar">
      <svg width="16" height="16" viewBox="0 0 16 16" fill="none" stroke="#fff"><circle cx="8" cy="8" r="5" stroke-width="2"/><circle cx="8" cy="8" r="1" fill="#fff"/><path d="M8 0v3M8 13v3M0 8h3M13 8h3M2.300 2.300l2 2M11.700 11.700l2 2M2.300 13.700l2-2M11.700 4.300l2-2" stroke-width="2"/></svg>
      <h1>钻孔 - [DRILLING]</h1>
      <button type="button" aria-label="关闭"><svg width="12" height="12"><path d="M1 1l10 10M11 1L1 11" stroke="#fff" stroke-width="2"/></svg></button>
    </div>
    <div class="panels">
      <section class="panel">
        <button type="button" class="head" aria-expanded="true">几何体<svg><use href="#chev-up"/></svg></button>
        <div class="body">
          <div class="row"><label for="geom">几何体</label><div class="pick w-mid"><select id="geom"><option>MCS_MILL</option></select><svg class="caret"><use href="#caret"/></svg></div><button type="button" class="ib" aria-label="新建几何体"><svg><use href="#newgeom"/></svg></button><button type="button" class="ib" aria-label="编辑几何体"><svg><use href="#wrench"/></svg></button></div>
          <div class="row tall"><span>指定孔</span><button type="button" class="ib" aria-label="指定孔"><svg><use href="#plate"/></svg></button><button type="button" class="ib" aria-label="显示孔"><svg><use href="#torch"/></svg></button></div>
          <div class="row tall"><span>指定顶面</span><button type="button" class="ib top" aria-label="指定顶面"><svg><use href="#plate"/></svg></button><button type="button" class="ib" aria-label="显示顶面"><svg><use href="#torch"/></svg></button></div>
          <div class="row tall"><span>指定底面</span><button type="button" class="ib" aria-label="指定底面"><svg><use href="#plate-bottom"/></svg></button><button type="button" class="ib" aria-label="显示底面"><svg><use href="#torch"/></svg></button></div>
        </div>
      </section>
      <section class="panel"><button type="button" class="head" aria-expanded="false">工具<svg><use href="#chev-down"/></svg></button></section>
      <section class="panel"><button type="button" class="head" aria-expanded="false">刀轴<svg><use href="#chev-down"/></svg></button></section>
      <section class="panel">
        <button type="button" class="head" aria-expanded="true">循环类型<svg><use href="#chev-up"/></svg></button>
        <div class="body">
          <div class="row"><label for="cycle">循环</label><div class="pick w-wide"><select id="cycle"><option>标准背镗...</option></select><svg class="caret"><use href="#caret"/></svg></div><button type="button" class="ib" aria-label="编辑循环"><svg><use href="#wrench"/></svg></button></div>
          <div class="row"><label for="minclr">最小安全距离</label><input id="minclr" type="text" value="2.0000"></div>
        </div>
      </section>
      <section class="panel">
        <button type="button" class="head" aria-expanded="true">深度偏置<svg><use href="#chev-up"/></svg></button>
        <div class="body">
          <div class="row"><label for="thru">通孔安全距离</label><input id="thru" type="text" value="1.5000"></div>
          <div class="row"><label for="blind">盲孔余量</label><input id="blind" type="text" value="0.0000"></div>
        </div>
      </section>
      <section class="panel">
        <button type="button" class="head" aria-expanded="true">刀轨设置<svg><use href="#chev-up"/></svg></button>
        <div class="body">
          <div class="row"><label for="method">方法</label><div class="pick w-mid"><select id="method"><option>METHOD</option></select><svg class="caret"><use href="#caret"/></svg></div><button type="button" class="ib" aria-label="新建方法"><svg><use href="#newmethod"/></svg></button><button type="button" class="ib" disabled aria-label="编辑方法"><svg><use href="#wrench"/></svg></button></div>
          <div class="row"><span>避让</span><button type="button" class="ib" aria-label="避让"><svg><use href="#avoid"/></svg></button></div>
          <div class="row"><span>进给率和速度</span><button type="button" class="ib" aria-label="进给率和速度"><svg><use href="#feeds"/></svg></button></div>
        </div>
      </section>
      <section class="panel"><button type="button" class="head" aria-expanded="false">机床控制<svg><use href="#chev-down"/></svg></button></section>
      <section class="panel"><button type="button" class="head" aria-expanded="false">程序<svg><use href="#chev-down"/></svg></button></section>
      <section class="panel"><button type="button" class="head" aria-expanded="false">描述<svg><use href="#chev-down"/></svg></button></section>
      <section class="panel"><button type="button" class="head" aria-expanded="false">选项<svg><use href="#chev-down"/></svg></button></section>
      <section class="panel">
        <button type="button" class="head" aria-expanded="true">操作<svg><use href="#chev-up"/></svg></button>
        <div class="body">
          <div class="row actions">
            <button type="button" class="ib" aria-label="生成"><svg><use href="#gen"/></svg></button>
            <button type="button" class="ib" aria-label="重播"><svg><use href="#replay"/></svg></button>
            <button type="button" class="ib" aria-label="确认"><svg><use href="#verify"/></svg></button>
            <button type="button" class="ib" aria-label="列表"><svg><use href="#listing"/></svg></button>
          </div>
        </div>
      </section>
    </div>
    <div class="footer"><button type="button" class="ok">确定</button><button type="button">取消</button></div>
    <div class="mark mark-title"></div>
    <div class="mark mark-faces"></div>
    <div class="mark mark-cycle"></div>
  </form>
  <p class="credit"><span>UG</span>爱好者论坛 <span>WWW.UGSNX.COM</span></p>
</div>
</body>
</html>
```
FILE: styles.css
```css
* { box-sizing: border-box; }

body {
  margin: 0;
  overflow: hidden;
  background: #fff;
  color: #1a1a1a;
  font: 18px/24px "Open Sans", "Noto Sans CJK SC", sans-serif;
}

button, select, input { font: inherit; color: inherit; margin: 0; }
button { border: 0; padding: 0; background: none; }
h1, h2, p { margin: 0; font-size: 18px; font-weight: 400; }
svg { display: block; flex: none; }
.defs { position: absolute; width: 0; height: 0; }
.caret { width: 7px; height: 4px; }

.app {
  position: relative;
  height: 100vh;
  display: flex;
  flex-direction: column;
  overflow: hidden;
}

/* ribbon tabs */
.tabs {
  flex: none;
  display: flex;
  align-items: flex-end;
  height: 12px;
  overflow: hidden;
  background: #dcdcdc;
}
.tab {
  flex: none;
  height: 32px;
  padding: 2px 13px;
  font-size: 21px;
  line-height: 28px;
  white-space: nowrap;
}
.tab.file { width: 104px; margin: 0 2px 0 -47px; background: #559fb9; color: #fff; }
.tab.active { background: #fff; color: #00698c; }
.finder {
  width: 188px;
  height: 30px;
  margin: 0 12px 5px auto;
  border: 1px solid #999;
  background: #fff;
}
.expand { width: 16px; margin-right: 9px; padding-bottom: 9px; }

/* ribbon */
.ribbon {
  flex: none;
  display: flex;
  height: 117px;
  border-bottom: 1px solid #dcdcdc;
  overflow: hidden;
}
.group { display: flex; flex-direction: column; justify-content: space-between; padding: 5px 0 0; }
.group.first { flex: none; width: 290px; position: relative; }
.group.first::after { content: ""; position: absolute; right: 0; top: 5px; bottom: 5px; width: 1px; background: #d8d8d8; }
.group.first .tools { margin-left: -37px; }
.group.second { flex: 1; min-width: 0; padding-left: 12px; }
.group.third { flex: none; width: 22px; }
.group.third .cmd { align-items: flex-start; }
.tools { display: flex; gap: 9px; }
.cmd {
  flex: none;
  display: flex;
  flex-direction: column;
  align-items: center;
  gap: 4px;
  font-size: 17px;
  line-height: 23px;
  white-space: nowrap;
}
.cmd svg { width: 32px; height: 32px; }
.cmd:disabled { color: #c8c8c8; --wf: #e4e4e4; --ws: #aaa; }
.gallery { margin: -5px 0 0 -8px; }
.group-title {
  display: flex;
  justify-content: center;
  align-items: center;
  padding-bottom: 1px;
  color: #00698c;
  font-size: 17px;
  line-height: 22px;
}
.group.first .group-title span { flex: 1; padding-right: 56px; text-align: center; }
.group.first .group-title .caret { margin-right: 11px; color: #111; }
.group.second .group-title { padding-right: 164px; }

/* toolbar */
.toolbar {
  flex: none;
  display: flex;
  align-items: center;
  height: 39px;
  border-bottom: 1px solid #868e92;
}
.menu { display: flex; align-items: center; justify-content: flex-end; gap: 5px; width: 83px; margin-left: -22px; padding-right: 7px; white-space: nowrap; }
.set { display: flex; align-items: center; gap: 1px; height: 31px; border-left: 1px solid #d8d8d8; }
.nav-set { width: 114px; padding-left: 9px; }
.nav-set + .set { width: 64px; padding-left: 9px; gap: 0; }
.sel-set { padding-left: 12px; gap: 8px; }
.snap-set { border: 0; padding-left: 4px; width: 289px; }
.view-set { padding: 0 7px 0 8px; border-right: 1px solid #d8d8d8; }
.tb { flex: none; display: grid; place-items: center; width: 24px; height: 22px; border: 1px solid transparent; }
.tb svg { width: 16px; height: 16px; }
.tb.on { background: #cce6ec; border-color: #9fcbd6; }
.drop { flex: none; display: grid; justify-items: start; align-items: center; width: 12px; height: 22px; }
.view-set .drop { width: 16px; padding-left: 3px; }

.pick { position: relative; }
.pick select {
  appearance: none;
  display: block;
  width: 100%;
  height: 100%;
  padding: 0 22px 0 4px;
  border: 1px solid #a0a0a0;
  border-radius: 0;
  background: #fff;
}
.pick .caret { position: absolute; right: 8px; top: calc(50% - 3px); width: 12px; height: 6px; pointer-events: none; }
.sel-set .pick { width: 202px; height: 27px; color: #a8a8a8; font-size: 17px; }
.sel-set .pick + .pick { width: 213px; }
.sel-set .pick select { padding-left: 2px; }

/* work area */
.work { flex: 1; min-height: 0; display: flex; }
.navigator {
  position: relative;
  flex: none;
  width: 702px;
  display: flex;
  flex-direction: column;
  border-right: 1px solid #868e92;
}
.nav-head {
  flex: none;
  display: flex;
  align-items: center;
  justify-content: space-between;
  height: 34px;
  padding: 2px 17px 0 0;
}
.nav-head h2 { margin-left: -4px; }
.table-wrap {
  flex: 1;
  min-height: 0;
  overflow: hidden;
  margin-right: 9px;
  border-top: 1px solid #d8d8d8;
  border-right: 1px solid #d8d8d8;
}
.ops { width: 100%; table-layout: fixed; border-collapse: separate; border-spacing: 0; }
.c-name { width: 256px; }
.c-a { width: 34px; }
.c-b { width: 33px; }
.c-c { width: 36px; }
.c-d { width: 111px; }
.c-e { width: 99px; }
.c-f { width: 87px; }
.ops th, .ops td {
  height: 28px;
  padding: 0 0 0 4px;
  border-right: 1px solid #ebebeb;
  border-bottom: 1px solid #ebebeb;
  text-align: left;
  font-size: 19px;
  font-weight: 400;
  white-space: nowrap;
  overflow: hidden;
  line-height: 27px;
}
.ops th {
  height: 29px;
  padding-left: 6px;
  background: #efefef;
  border-color: #d0d0d0;
  font-size: 18px;
  line-height: 28px;
}
.ops th:first-child, .ops td:first-child { padding-left: 0; }
.ops td:first-child { border-right-color: #000; }
.ops th:last-child, .ops td:last-child { border-right: 0; }
.ops tr:nth-child(even) td { background: #fafafa; }
.ops td > svg { margin-left: 2px; }
.ops td:nth-child(3) > svg { margin-left: 4px; }
.cut { margin-left: -5px; }
.node { display: flex; height: 27px; }
.node span { flex: 1; padding-left: 1px; }
.node .zh { font-size: 18px; }
.node .dots { stroke: #999; stroke-dasharray: 1 1; }
.node .exp { fill: #fff; stroke: #d0d0d0; }
.ops tr.selected td:not(:first-child):not(:last-child), .selected .node span { background: #8bc1d1; }
.selected .node span, .pending .node span { padding-left: 2px; }
.pending { color: #6a35cc; }

.rail { flex: none; width: 34px; padding: 12px 4px 0; }
.rail button { display: flex; justify-content: center; width: 26px; height: 30px; border-bottom: 1px solid #d0d0d0; }

.stage { flex: 1; min-width: 0; display: flex; flex-direction: column; }
.doc-tabs { flex: none; height: 30px; border-bottom: 2px solid #559fb9; }
.doc-tab {
  display: flex;
  align-items: center;
  gap: 6px;
  width: 118px;
  height: 30px;
  padding-left: 6px;
  background: #559fb9;
  color: #fff;
  font-size: 19px;
}
.doc-tab span { margin-left: -2px; }
.canvas {
  flex: 1;
  min-height: 0;
  border-left: 1px solid #d4d6d8;
  background: linear-gradient(#a3a4a6 0, #a8abac 15%, #b3b6b8 36%, #c3c6ca 64%, #c9ccd1 80%, #c9ccd1);
}
.scene { width: 100%; height: 100%; }
.axis text { font: 15px "Liberation Sans", sans-serif; }
.axis .small { font-size: 12px; }

/* operation dialog */
.dialog {
  position: absolute;
  top: 27px;
  right: 7px;
  width: 429px;
  background: #efefef;
  border: 1px solid #d0d2d4;
  border-top: 0;
}
.titlebar {
  display: flex;
  align-items: center;
  gap: 9px;
  height: 32px;
  margin: 0 -1px;
  padding: 0 12px 0 11px;
  background: #559fb9;
  color: #fff;
}
.titlebar h1 { flex: 1; font-size: 23px; line-height: 32px; }
.panels { display: flex; flex-direction: column; gap: 3px; padding: 4px 5px 0; }
.panel { background: #fff; border-bottom: 1px solid #c4c6c8; }
.head {
  display: flex;
  justify-content: space-between;
  width: 100%;
  height: 31px;
  padding: 0 6px 0 7px;
  color: #00698c;
  font-size: 22px;
  line-height: 34px;
}
.head svg { width: 19px; height: 15px; margin-top: 8px; }
.body { display: flex; flex-direction: column; gap: 2px; padding: 7px 9px 8px; }
.row { display: flex; align-items: center; gap: 2px; }
.row > :first-child:not(button) { flex: 1; padding-top: 2px; }
.row.tall { align-items: flex-start; height: 36px; }
.row.tall > span:first-child { padding-top: 10px; }
.row .pick { height: 32px; }
.w-mid { width: 136px; font-size: 19px; }
.w-wide { width: 152px; }
.w-wide select { padding-left: 3px; }
.row input {
  width: 90px;
  height: 30px;
  padding: 0 5px 2px;
  border: 1px solid #a0a0a0;
  background: #fff;
  color: #333;
  text-align: right;
  font: 17px "Liberation Mono", monospace;
}
.ib { display: grid; place-items: center; width: 32px; height: 32px; border: 1px solid #a0a0a0; background: #fff; }
.ib svg { width: 23px; height: 23px; }
.ib.top { --top: #e51b23; --dot: #7a1016; }
.ib:disabled { border-color: #d0d0d0; --wf: #d8d4c4; --ws: #a8a498; }
.actions { justify-content: center; }
.footer { display: flex; justify-content: flex-end; gap: 5px; padding: 11px 15px 10px; }
.footer button { width: 66px; height: 32px; border: 1px solid #a8a8a8; background: #dcdcdc; }
.footer .ok { background: #72b3ca; border-color: #72b3ca; color: #fff; }

/* callout frames */
.mark { position: absolute; border: 3px solid #f81cf0; pointer-events: none; }
.mark-rows { left: 43px; top: 161px; width: 622px; height: 74px; }
.mark-title { left: 85px; top: -8px; width: 157px; height: 53px; }
.mark-faces { left: -6px; top: 149px; width: 438px; height: 74px; }
.mark-cycle { left: 204px; top: 324px; width: 240px; height: 86px; }

.credit {
  position: absolute;
  right: 5px;
  bottom: 3px;
  color: #777;
  font: 16px/18px "Liberation Mono", "Noto Sans CJK SC", monospace;
  text-shadow: 1px 1px 0 #fff;
  white-space: nowrap;
}
.credit span { font-size: 13px; }
```
